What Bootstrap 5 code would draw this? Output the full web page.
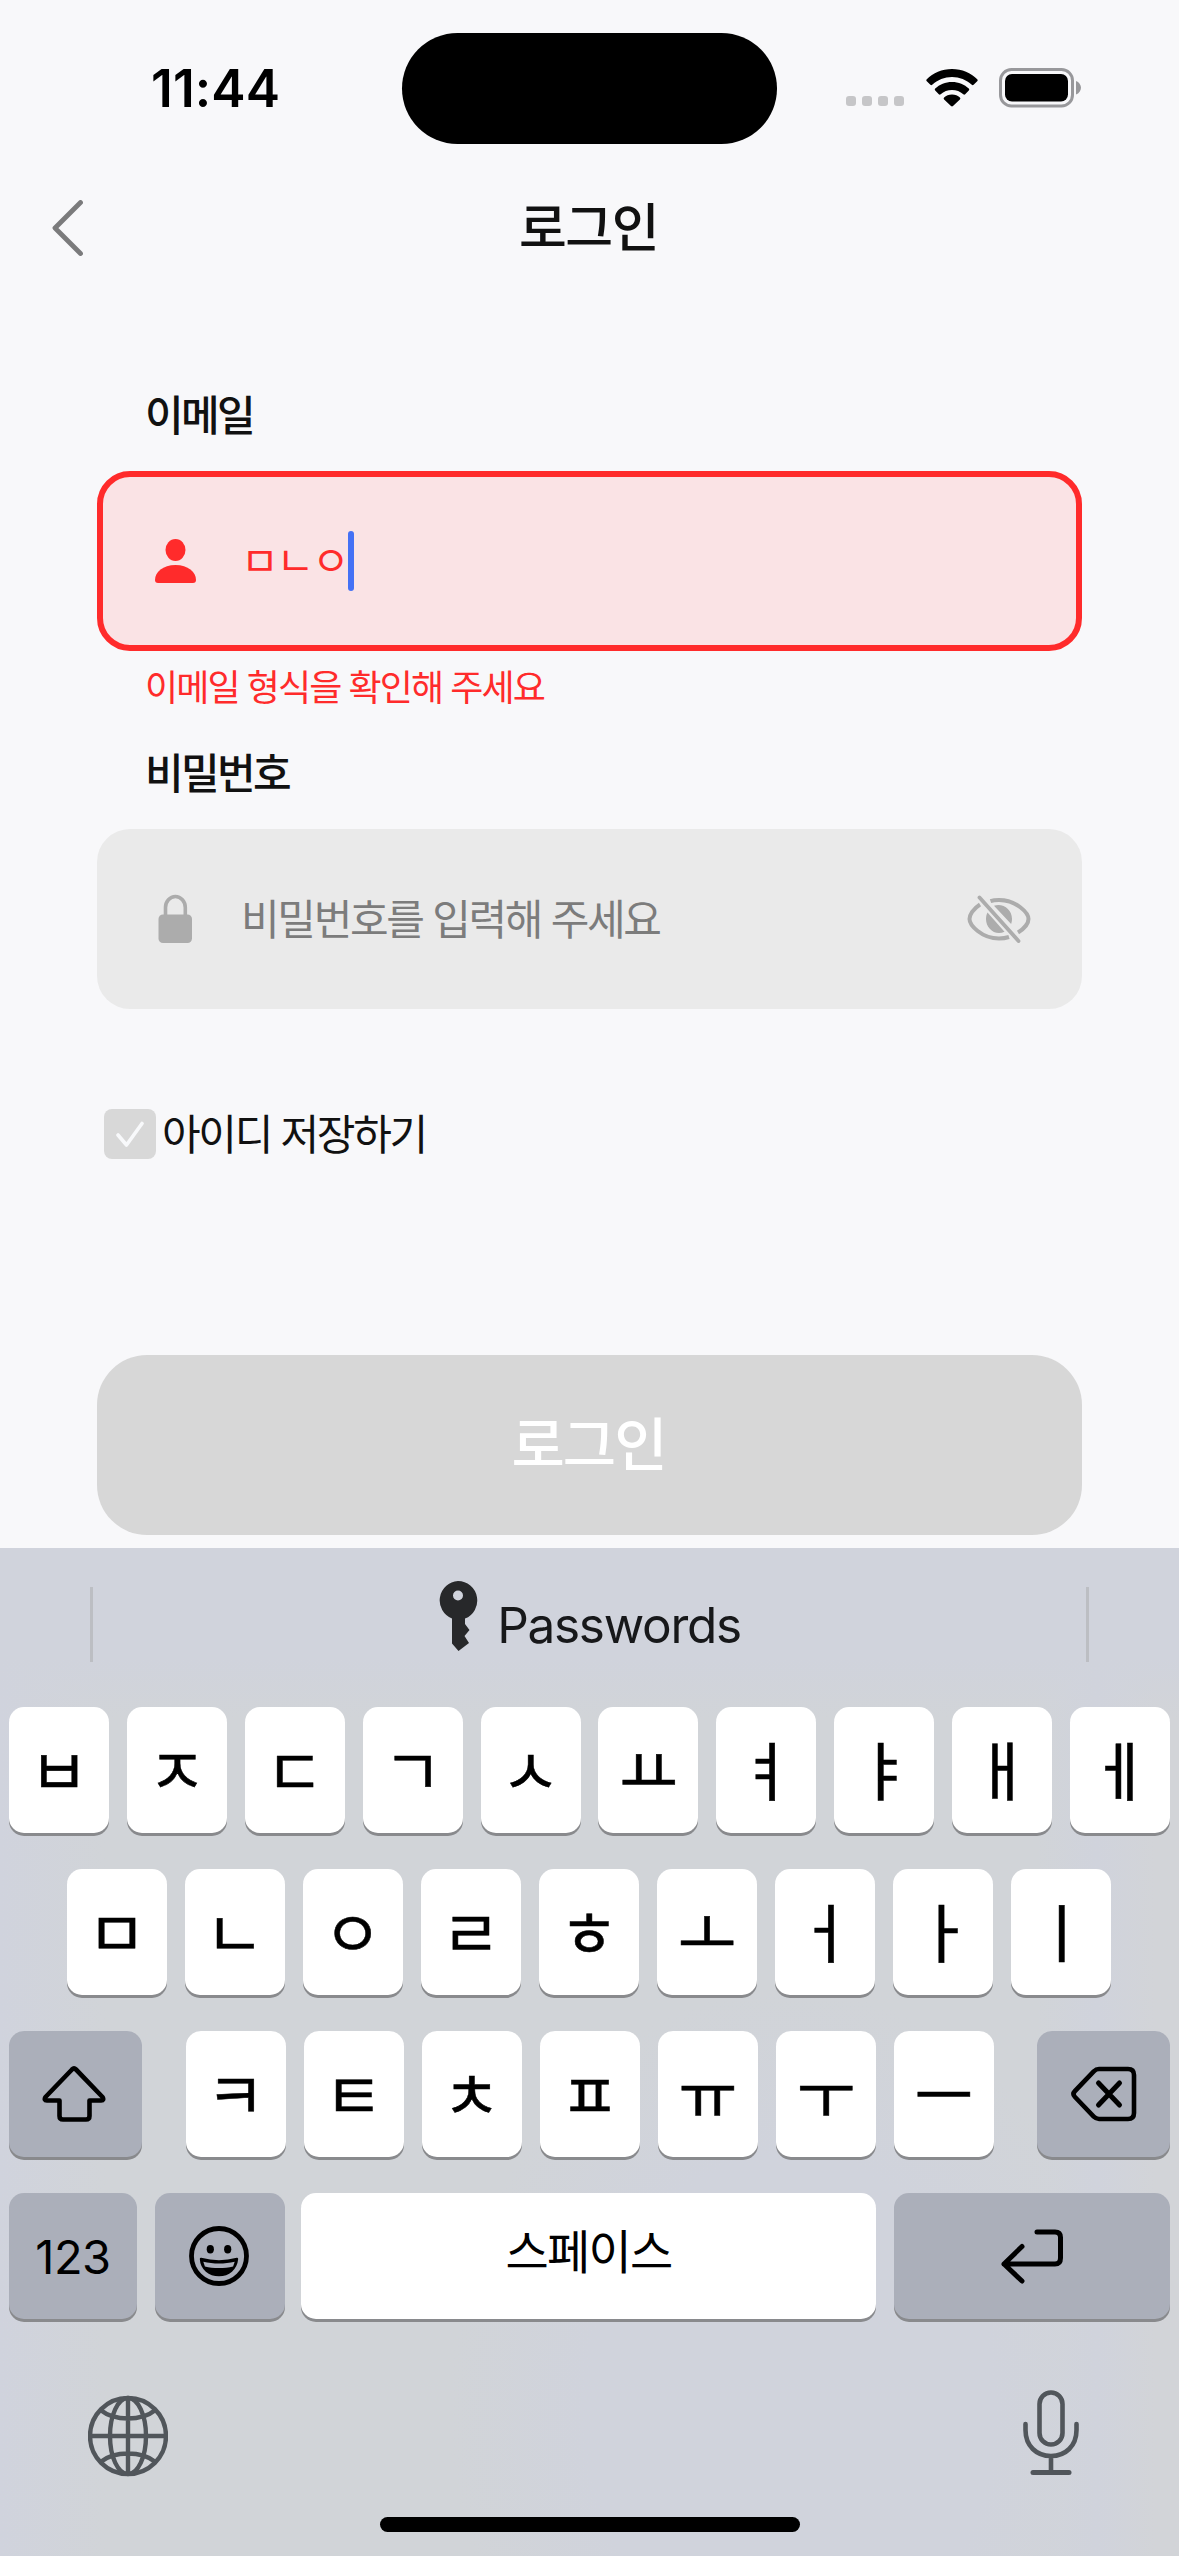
<!DOCTYPE html>
<html lang="ko">
<head>
<meta charset="utf-8">
<meta name="viewport" content="width=device-width, initial-scale=1">
<title>로그인</title>
<link href="https://cdn.jsdelivr.net/npm/bootstrap@5.3.0/dist/css/bootstrap.min.css" rel="stylesheet">
<style>
  body { width: 1179px; height: 2556px; overflow: hidden; background: #f8f8fa; color: #111; font-family: "Noto Sans CJK KR", sans-serif; }
  svg { display: block; flex: none; }
  .latin { font-family: Inter, "Liberation Sans", sans-serif; }

  .status-bar { height: 165px; }
  .clock { width: 402px; padding: 60px 0 0 151px; font-size: 51.500px; line-height: 56px; font-weight: 600; color: #000; letter-spacing: .1px; }
  .island { width: 375px; height: 111px; margin-top: 33px; border-radius: 56px; background: #000; }
  .indicators { margin: 68px 0 0 69px; }
  .signal { gap: 6px; margin: 28px 22px 0 0; }
  .signal i { width: 10px; height: 10px; border-radius: 3px; background: #c6c6c8; }

  .title-bar { height: 125px; padding: 0 52px; }
  .title-bar h1 { font-size: 52px; line-height: 60px; font-weight: 500; letter-spacing: -1.5px; padding-bottom: 6px; }

  .login-form { padding: 100px 97px 0; height: 1258px; }
  .field-label { font-size: 42px; line-height: 46px; font-weight: 500; letter-spacing: -2.6px; padding-left: 48px; }
  .field-box { height: 180px; border-radius: 33px; background: #eaeaea; padding: 0 51px 0 58px; }
  .field-box.invalid { background: #fae3e5; border: 6px solid #ff2b2b; padding: 0 46px 0 52px; color: #ff2b2b; margin-top: 35px; }
  .field-text { font-size: 42px; line-height: 56px; letter-spacing: -2.300px; padding-bottom: 5px; }
  .typed { font-size: 41px; line-height: 56px; letter-spacing: -2.200px; padding-bottom: 6px; }
  .caret { width: 6px; height: 60px; border-radius: 3px; background: #4471f5; }
  .error-text { font-size: 36px; line-height: 40px; letter-spacing: -1.920px; color: #ff2b2b; padding-left: 48px; margin: 14px 0 43px; }
  .hint { color: #7c7c7c; }
  .tick { width: 52px; height: 50px; border-radius: 8px; background: #d8d8d8; }
  .submit-btn { height: 180px; border-radius: 50px; background: #d7d7d7; border: 0; color: #fff; font-size: 58px; font-weight: 500; letter-spacing: -2px; line-height: 60px; padding: 0 2px 9px 0; }

  .keyboard { height: 1008px; padding: 0 9px;
    background:
      linear-gradient(180deg, #d0d3dc 0 110px, transparent 170px),
      radial-gradient(ellipse 340px 420px at 790px 860px, #d0d3dc 60%, transparent 100%),
      linear-gradient(90deg, #d0d3dd 0, #d1d4d8 9%, #d1d4d8 88%, #d0d3dc 93%, #d2d4d8 98%); }
  .suggestions { height: 159px; padding: 0 81px; }
  .suggestions .rule { width: 3px; height: 75px; background: #bcbec3; margin-top: 39px; }
  .suggestions .passwords { font-size: 49.500px; line-height: 60px; color: #17181a; letter-spacing: -1.300px; margin-top: 47px; }
  .key-rows { gap: 36px; }
  .key-row { height: 126px; }
  .key-row.home-row { padding-right: 1px; }
  .key-row .letters { gap: 18.100px; }
  .kc { width: 100px; height: 126px; border-radius: 15px; background: #fff; box-shadow: 0 3px 0 #898a8d; color: #000; font-size: 64px; line-height: 1; padding-bottom: 7px; -webkit-text-stroke: .5px #000; }
  .kc.fn { background: #abafba; padding-bottom: 0; -webkit-text-stroke: 0; }
  .w-shift { width: 133px; }
  .w-num { width: 128px; font-size: 47px; letter-spacing: -.5px; }
  .w-emoji { width: 130px; }
  .w-space { width: 575px; font-size: 47px; letter-spacing: -1.800px; padding-bottom: 15px; -webkit-text-stroke: 0; }
  .w-ret { width: 276px; }
  .kb-foot { height: 237px; padding: 71px 91px 0 78.500px; }
  .home-bar { width: 420px; height: 15px; border-radius: 8px; background: #000; margin-top: -39px; }
</style>
</head>
<body>
<div class="status-bar d-flex align-items-start">
  <div class="clock latin">11:44</div>
  <div class="island"></div>
  <div class="indicators d-flex">
    <div class="signal d-flex"><i></i><i></i><i></i><i></i></div>
    <svg width="52" height="39" viewBox="0 0 52 39">
      <path d="M26 1C16 1 7 5 .8 11.2q-1 1 0 2l3.600 3.600q.9.900 1.800 0C11.600 11.800 18.500 9 26 9s14.400 2.800 19.800 7.800q.9.900 1.800 0l3.600-3.600q1-1 0-2C45 5 36 1 26 1z"/>
      <path d="M26 14c-6.600 0-12.500 2.500-16.800 6.600q-1 1 0 2l3.600 3.600q.9.900 1.900 0C17.700 23.500 21.700 22 26 22s8.300 1.500 11.300 4.200q1 .9 1.900 0l3.600-3.600q1-1 0-2C38.500 16.500 32.600 14 26 14z"/>
      <path d="M26 26.600c-3.200 0-5.900 1.100-7.900 3q-1 1 0 1.900l6.900 6.600q1 .9 2 0l6.900-6.600q1-.9 0-1.900c-2-1.900-4.700-3-7.900-3z"/>
    </svg>
    <svg width="84" height="40" viewBox="0 0 84 40" style="margin-left:21px">
      <rect x="1.500" y="1.500" width="72" height="36.500" rx="11" fill="none" stroke="#98989b" stroke-width="3"/>
      <rect x="6" y="6" width="63" height="27.500" rx="7"/>
      <path d="M77 13c3 1 5 4 5 6.800s-2 5.800-5 6.800z" fill="#98989b"/>
    </svg>
  </div>
</div>

<header class="title-bar d-flex align-items-center justify-content-between">
  <svg width="31" height="56" viewBox="0 0 31 56"><path d="M28.500 2.500L3 28l25.500 25.500" fill="none" stroke="#7b7b7c" stroke-width="4.800" stroke-linecap="round" stroke-linejoin="round"/></svg>
  <h1 class="m-0">로그인</h1>
  <span style="width:33px"></span>
</header>

<main class="login-form">
  <div class="field-label">이메일</div>
  <div class="field-box invalid d-flex align-items-center">
    <svg width="41" height="45" viewBox="0 0 41 45" fill="#ff2b2b"><ellipse cx="20.500" cy="11" rx="10" ry="11"/><path d="M0 41C0 33 8 26 20.500 26S41 33 41 41q0 3-3 3H3q-3 0-3-3z"/></svg>
    <span class="typed" style="margin-left:45px">ㅁㄴㅇ</span><span class="caret"></span>
  </div>
  <div class="error-text">이메일 형식을 확인해 주세요</div>
  <div class="field-label">비밀번호</div>
  <div class="field-box d-flex align-items-center" style="margin-top:35px">
    <svg width="40" height="50" viewBox="0 0 40 50"><path d="M10.500 23V13.500a9.900 11 0 0 1 19.800 0V23" fill="none" stroke="#acacac" stroke-width="3.600"/><rect x="3.500" y="20.500" width="33.500" height="28.500" rx="4.500" fill="#acacac"/></svg>
    <span class="field-text hint" style="margin-left:46px">비밀번호를 입력해 주세요</span>
    <svg class="ms-auto" width="64" height="48" viewBox="0 0 64 48">
      <path d="M13 9.500C6 14 2.500 20 2.500 24c0 6 12 19.500 29.500 19.500 4 0 7-.5 10-1.500M23.500 6.200C26 5.300 29 5 32 5c17.500 0 29.500 13 29.500 19 0 4-4 9.500-10.500 13.500" fill="none" stroke="#acacac" stroke-width="4"/>
      <path d="M27 10.800c9-3 18 4 18 13 0 2-.3 3.500-.9 5.200zM20.500 17.500L37.500 36.800C28 41 19 33.500 19 24c0-2.500.5-4.500 1.500-6.500z" fill="#acacac"/>
      <path d="M12.500 2.500L51.500 46" stroke="#acacac" stroke-width="3.800" stroke-linecap="round"/>
    </svg>
  </div>
  <div class="d-flex align-items-center" style="margin:100px 0 0 7px">
    <div class="tick d-flex align-items-center justify-content-center"><svg width="28" height="27" viewBox="0 0 28 27"><path d="M2 14l8.500 10L26 2.500" fill="none" stroke="#f8f9fb" stroke-width="3.600" stroke-linecap="round" stroke-linejoin="round"/></svg></div>
    <span class="field-text" style="margin:-6px 0 -6px 6px">아이디 저장하기</span>
  </div>
  <button class="submit-btn d-block w-100" style="margin-top:196px">로그인</button>
</main>

<section class="keyboard">
  <div class="suggestions d-flex justify-content-between align-items-start">
    <span class="rule"></span>
    <div class="d-flex align-items-start">
      <svg width="40" height="70" viewBox="0 0 40 70" style="margin-top:33px"><path fill="#27282a" fill-rule="evenodd" d="M20 0a19.500 19.500 0 0 1 7 37.600V43l4.500 6-5 6 4.500 7-10.500 8L14 62.500V37.600A19.500 19.500 0 0 1 20 0zm0 9.500a5 5 0 1 0 0 10 5 5 0 0 0 0-10z"/></svg>
      <span class="passwords latin" style="margin-left:19px">Passwords</span>
    </div>
    <span class="rule"></span>
  </div>
  <div class="key-rows d-flex flex-column">
    <div class="key-row d-flex justify-content-between">
      <span class="kc d-flex align-items-center justify-content-center">ㅂ</span><span class="kc d-flex align-items-center justify-content-center">ㅈ</span><span class="kc d-flex align-items-center justify-content-center">ㄷ</span><span class="kc d-flex align-items-center justify-content-center">ㄱ</span><span class="kc d-flex align-items-center justify-content-center">ㅅ</span><span class="kc d-flex align-items-center justify-content-center">ㅛ</span><span class="kc d-flex align-items-center justify-content-center">ㅕ</span><span class="kc d-flex align-items-center justify-content-center">ㅑ</span><span class="kc d-flex align-items-center justify-content-center">ㅐ</span><span class="kc d-flex align-items-center justify-content-center">ㅔ</span>
    </div>
    <div class="key-row home-row d-flex justify-content-center">
      <div class="letters d-flex"><span class="kc d-flex align-items-center justify-content-center">ㅁ</span><span class="kc d-flex align-items-center justify-content-center">ㄴ</span><span class="kc d-flex align-items-center justify-content-center">ㅇ</span><span class="kc d-flex align-items-center justify-content-center">ㄹ</span><span class="kc d-flex align-items-center justify-content-center">ㅎ</span><span class="kc d-flex align-items-center justify-content-center">ㅗ</span><span class="kc d-flex align-items-center justify-content-center">ㅓ</span><span class="kc d-flex align-items-center justify-content-center">ㅏ</span><span class="kc d-flex align-items-center justify-content-center">ㅣ</span></div>
    </div>
    <div class="key-row d-flex">
      <span class="kc fn w-shift d-flex align-items-center justify-content-center pe-1"><svg width="64" height="56" viewBox="0 0 64 56"><path d="M30 3.500q2-2 4 0L60.500 31q2 3.200-1.500 3.500H47.500V50q0 3.500-3.500 3.500H21q-3.500 0-3.500-3.500V34.500H5Q1.500 34.200 3.500 31z" fill="none" stroke="#000" stroke-width="4.600" stroke-linejoin="round"/></svg></span>
      <div class="letters d-flex" style="margin-left:43.500px"><span class="kc d-flex align-items-center justify-content-center">ㅋ</span><span class="kc d-flex align-items-center justify-content-center">ㅌ</span><span class="kc d-flex align-items-center justify-content-center">ㅊ</span><span class="kc d-flex align-items-center justify-content-center">ㅍ</span><span class="kc d-flex align-items-center justify-content-center">ㅠ</span><span class="kc d-flex align-items-center justify-content-center">ㅜ</span><span class="kc d-flex align-items-center justify-content-center">ㅡ</span></div>
      <span class="kc fn w-shift ms-auto d-flex align-items-center justify-content-center"><svg width="66" height="56" viewBox="0 0 66 56"><path d="M28 3h29q6 0 6 6v38q0 6-6 6H28q-3 0-5-2.200L4 31q-3-3 0-6L23 5.200Q25 3 28 3z" fill="none" stroke="#000" stroke-width="4.600" stroke-linejoin="round"/><path d="M27.500 17l21 22M48.500 17l-21 22" stroke="#000" stroke-width="5" stroke-linecap="round"/></svg></span>
    </div>
    <div class="key-row d-flex">
      <span class="kc fn w-num latin d-flex align-items-center justify-content-center">123</span>
      <span class="kc fn w-emoji d-flex align-items-center justify-content-center" style="margin-left:18px;padding-right:2px"><svg width="60" height="60" viewBox="0 0 60 60"><circle cx="30" cy="30" r="27.500" fill="none" stroke="#000" stroke-width="4.800"/><ellipse cx="21.300" cy="23.200" rx="3.600" ry="4.200"/><ellipse cx="38.700" cy="23.200" rx="3.600" ry="4.200"/><path d="M12 33c11 3 25 3 36 0-1 10-8.500 16-18 16S12.500 43 12 33z" stroke="#000" stroke-width="2.400" stroke-linejoin="round"/><path d="M14.300 35.800c10 2.400 21.400 2.400 31.400 0l-1.600 4.600c-8.500 2-20 2-28.200 0z" fill="#abafba"/></svg></span>
      <span class="kc w-space d-flex align-items-center justify-content-center" style="margin-left:16px">스페이스</span>
      <span class="kc fn w-ret d-flex align-items-center justify-content-center" style="margin-left:18px"><svg width="62" height="56" viewBox="0 0 62 56"><path d="M36 4h18q5.500 0 5.500 5.500V30q0 6-5.500 6H3M21 18.500L3 36l18 17" fill="none" stroke="#000" stroke-width="5" stroke-linecap="round" stroke-linejoin="round"/></svg></span>
    </div>
  </div>
  <div class="kb-foot d-flex justify-content-between align-items-start">
    <svg width="80" height="92" viewBox="0 0 80 92" fill="none" stroke="#51565b" stroke-width="4.400"><circle cx="40" cy="46" r="38"/><ellipse cx="40" cy="46" rx="18" ry="38"/><path d="M40 8v76M2 46h76M12.500 20Q23 28.500 40 28.500T67.500 20M12.500 72Q23 63.500 40 63.500T67.500 72"/></svg>
    <svg width="56" height="86" viewBox="0 0 56 86" fill="none" stroke="#51565b" stroke-width="4.600"><rect x="16.500" y="2.500" width="23" height="52" rx="11.500"/><path d="M2.500 34v6c0 16 11 26 25.500 26s25.500-10 25.500-26v-6M28 66v15" stroke-linecap="round"/><path d="M10 82.400h36" stroke-width="5" stroke-linecap="round"/></svg>
  </div>
  <div class="home-bar mx-auto"></div>
</section>
<script src="https://cdn.jsdelivr.net/npm/bootstrap@5.3.0/dist/js/bootstrap.bundle.min.js"></script>
</body>
</html>
